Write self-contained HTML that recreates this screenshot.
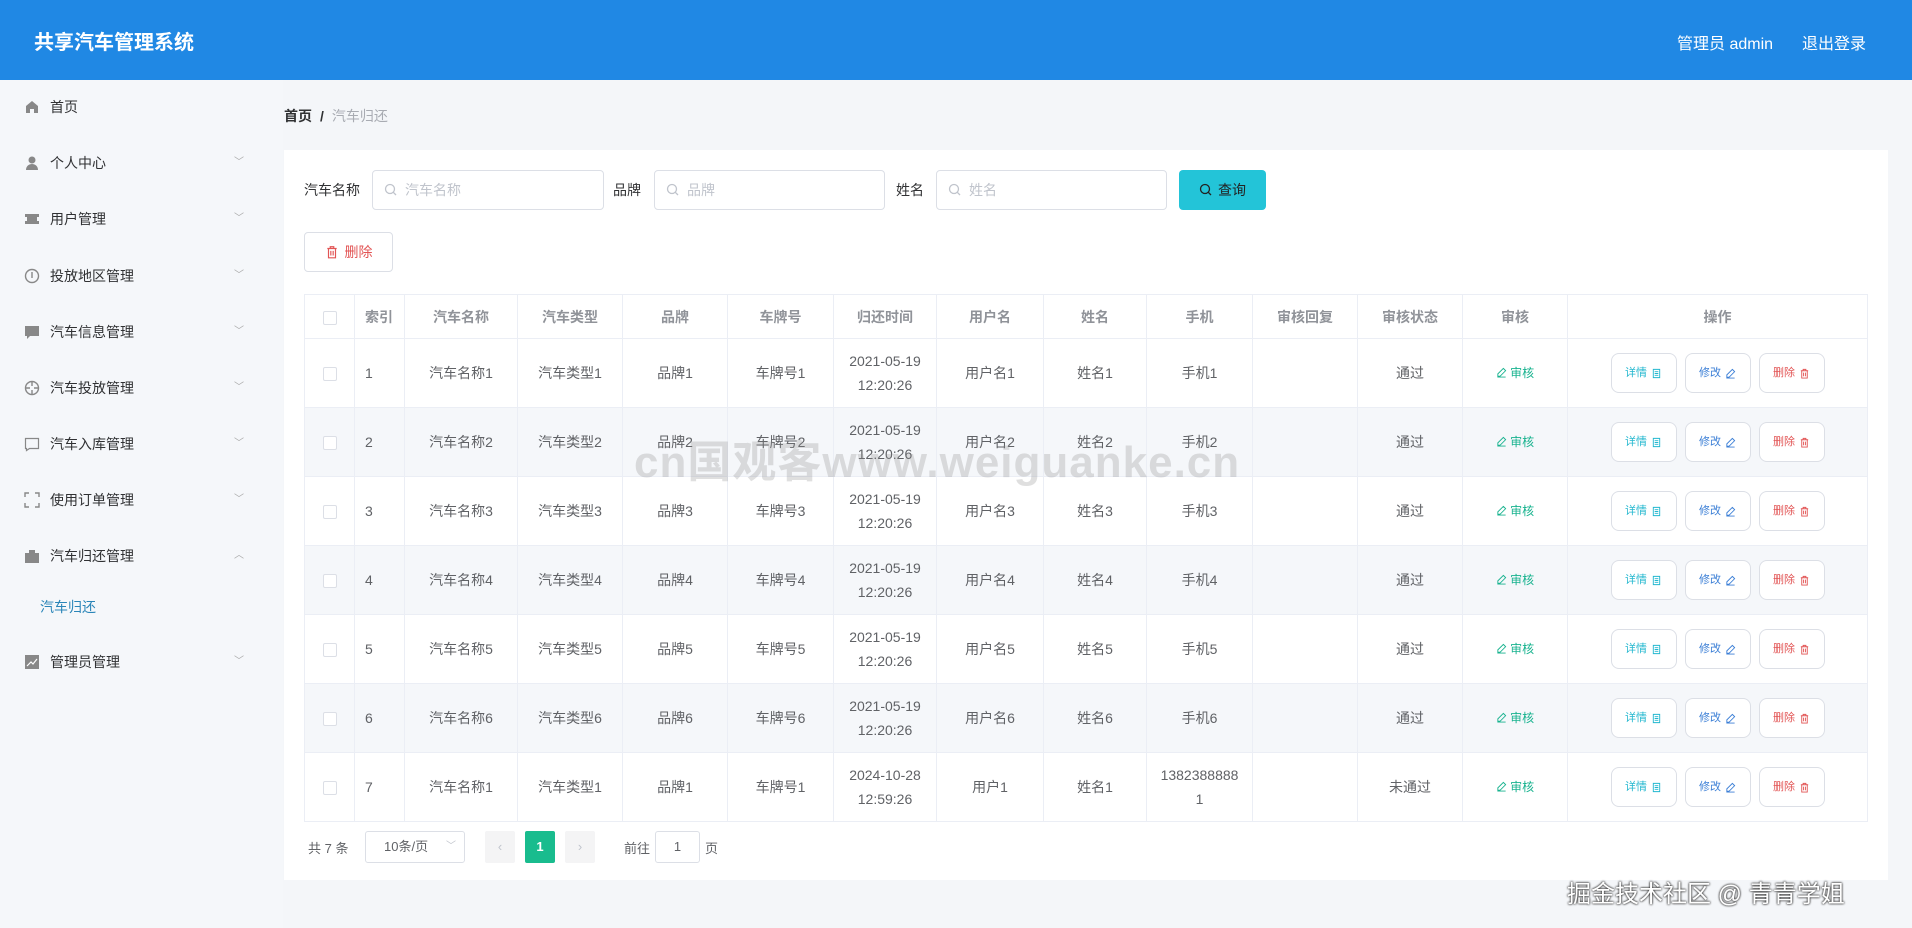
<!DOCTYPE html>
<html><head><meta charset="utf-8"><style>
*{box-sizing:border-box;margin:0;padding:0}
body{width:1912px;height:928px;overflow:hidden;background:#f4f6f9;font-family:"Liberation Sans","Noto Sans CJK SC",sans-serif;color:#606266;position:relative;font-size:14px}
.hd{position:absolute;left:0;top:0;width:1912px;height:80px;background:#2088e4;color:#fff}
.hd .t{position:absolute;left:34px;top:26px;font-size:20px;font-weight:bold}
.hd .r{position:absolute;top:30px;font-size:16px}
.side{position:absolute;left:0;top:80px;width:283px;height:848px;background:#f5f7fa}
.mi{position:absolute;left:24px;font-size:14px;color:#303133;height:20px;line-height:20px;width:220px}
.mi .ic{display:inline-block;width:16px;height:16px;vertical-align:-3px;margin-right:10px}
.mi .ch{position:absolute;right:0;top:0;color:#aaa;font-size:10px}
.card{position:absolute;left:284px;top:150px;width:1604px;height:730px;background:#fff}
.lbl{position:absolute;top:180px;font-size:14px;color:#303133}
.inp{position:absolute;top:170px;height:40px;border:1px solid #dcdfe6;border-radius:4px;color:#c0c4cc;font-size:14px;line-height:38px;padding-left:32px}
.inp svg{position:absolute;left:11px;top:12px}
table{position:absolute;left:304px;top:294px;border-collapse:collapse;table-layout:fixed;width:1563px}
td,th{border:1px solid #ebeef5;text-align:center;font-size:14px;vertical-align:middle}
th{height:44px;color:#909399;font-weight:bold;font-size:14px}
td{height:69px;color:#606266;line-height:24px}
tr.s td{background:#f5f7fa}
.cb{display:inline-block;width:14px;height:14px;border:1px solid #dcdfe6;border-radius:2px;background:#fff;vertical-align:middle}
.ob{display:inline-flex;align-items:center;justify-content:center;gap:4px;width:66px;height:40px;border:1px solid #dcdfe6;border-radius:8px;font-size:11px;margin:0 4px;background:#fff;vertical-align:middle}
.pg{position:absolute;font-size:13px;color:#606266}
</style></head><body>
<svg width="0" height="0" style="position:absolute"><defs>
<symbol id="tr" viewBox="0 0 12 12"><path d="M2 3h8M4.5 3V1.5h3V3M3 3v8h6V3M5 5v4M7 5v4" fill="none" stroke="currentColor" stroke-width="1"/></symbol>
<symbol id="ed" viewBox="0 0 12 12"><path d="M8 1.5l2.5 2.5L4.5 10H2V7.5zM1.5 11h9" fill="none" stroke="currentColor" stroke-width="1"/></symbol>
<symbol id="dc" viewBox="0 0 12 12"><path d="M2.5 1.5h7v9h-7zM4 4h4M4 6h4M4 8h4" fill="none" stroke="currentColor" stroke-width="1"/></symbol>
<symbol id="sr" viewBox="0 0 14 14"><circle cx="6" cy="6" r="4.5" fill="none" stroke="currentColor" stroke-width="1.3"/><path d="M9.3 9.3L12 12" stroke="currentColor" stroke-width="1.3"/></symbol>
</defs></svg>
<div class="hd"><div class="t">共享汽车管理系统</div><div class="r" style="left:1677px">管理员 admin</div><div class="r" style="left:1802px">退出登录</div></div>
<div class="side">
<div class="mi" style="top:17px"><svg class="ic" viewBox="0 0 16 16"><path d="M8 2L2 7v7h4v-4h4v4h4V7z" fill="#888"/></svg>首页</div>
<div class="mi" style="top:73px"><svg class="ic" viewBox="0 0 16 16"><circle cx="8" cy="5" r="3.5" fill="#888"/><path d="M2 15c0-4 3-6 6-6s6 2 6 6z" fill="#888"/></svg>个人中心<span class="ch">﹀</span></div>
<div class="mi" style="top:129px"><svg class="ic" viewBox="0 0 16 16"><path d="M1 3h14v3h-2v4h2v3H1v-3h2V6H1z" fill="#888"/></svg>用户管理<span class="ch">﹀</span></div>
<div class="mi" style="top:186px"><svg class="ic" viewBox="0 0 16 16"><circle cx="8" cy="8" r="6.5" fill="none" stroke="#888" stroke-width="1.4"/><path d="M8 4v6" stroke="#888" stroke-width="1.4"/></svg>投放地区管理<span class="ch">﹀</span></div>
<div class="mi" style="top:242px"><svg class="ic" viewBox="0 0 16 16"><path d="M1 2h14v10H6l-3 3v-3H1z" fill="#888"/></svg>汽车信息管理<span class="ch">﹀</span></div>
<div class="mi" style="top:298px"><svg class="ic" viewBox="0 0 16 16"><circle cx="8" cy="8" r="6.5" fill="none" stroke="#888" stroke-width="1.4"/><path d="M8 1v5M8 10v5M1 8h5M10 8h5" stroke="#888" stroke-width="1.4"/></svg>汽车投放管理<span class="ch">﹀</span></div>
<div class="mi" style="top:354px"><svg class="ic" viewBox="0 0 16 16"><path d="M1.5 2.5h13v10h-9l-3 2v-2h-1z" fill="none" stroke="#888" stroke-width="1.2"/></svg>汽车入库管理<span class="ch">﹀</span></div>
<div class="mi" style="top:410px"><svg class="ic" viewBox="0 0 16 16"><path d="M1 5V1h4M11 1h4v4M15 11v4h-4M5 15H1v-4" fill="none" stroke="#888" stroke-width="1.4"/></svg>使用订单管理<span class="ch">﹀</span></div>
<div class="mi" style="top:466px"><svg class="ic" viewBox="0 0 16 16"><path d="M5 2h6v3H5zM1 5h14v10H1z" fill="#888"/></svg>汽车归还管理<span class="ch">︿</span></div>
<div class="mi" style="top:517px;left:40px;color:#2a85b8">汽车归还</div>
<div class="mi" style="top:572px"><svg class="ic" viewBox="0 0 16 16"><rect x="1" y="1" width="14" height="14" fill="#888"/><path d="M3 12l4-4 2 2 4-5" stroke="#fff" stroke-width="1.2" fill="none"/></svg>管理员管理<span class="ch">﹀</span></div>
</div>
<div style="position:absolute;left:284px;top:106px;font-size:14px"><b style="color:#303133">首页</b><b style="color:#303133;margin:0 8px">/</b><span style="color:#a8abb2">汽车归还</span></div>
<div class="card"></div>
<div class="lbl" style="left:304px">汽车名称</div><div class="inp" style="left:372px;width:232px"><svg width="14" height="14" style="color:#c0c4cc"><use href="#sr"/></svg>汽车名称</div>
<div class="lbl" style="left:613px">品牌</div><div class="inp" style="left:654px;width:231px"><svg width="14" height="14" style="color:#c0c4cc"><use href="#sr"/></svg>品牌</div>
<div class="lbl" style="left:896px">姓名</div><div class="inp" style="left:936px;width:231px"><svg width="14" height="14" style="color:#c0c4cc"><use href="#sr"/></svg>姓名</div>
<div style="position:absolute;left:1179px;top:170px;width:87px;height:40px;background:#23c4d8;border-radius:4px;color:#222;font-size:14px;display:flex;align-items:center;justify-content:center;gap:5px"><svg width="14" height="14" style="color:#222"><use href="#sr"/></svg>查询</div>
<div style="position:absolute;left:304px;top:232px;width:89px;height:40px;border:1px solid #dcdfe6;border-radius:4px;color:#e25454;font-size:14px;display:flex;align-items:center;justify-content:center;gap:6px"><svg width="14" height="14" style="color:#e25454"><use href="#tr"/></svg>删除</div>
<table>
<colgroup><col width="50"><col width="50"><col width="113"><col width="105"><col width="105"><col width="106"><col width="103"><col width="107"><col width="103"><col width="106"><col width="105"><col width="105"><col width="105"><col width="300"></colgroup>
<tr><th><span class="cb"></span></th><th style="text-align:left;padding-left:10px">索引</th><th>汽车名称</th><th>汽车类型</th><th>品牌</th><th>车牌号</th><th>归还时间</th><th>用户名</th><th>姓名</th><th>手机</th><th>审核回复</th><th>审核状态</th><th>审核</th><th>操作</th></tr>
<tr><td><span class="cb"></span></td><td style="text-align:left;padding-left:10px">1</td><td>汽车名称1</td><td>汽车类型1</td><td>品牌1</td><td>车牌号1</td><td>2021-05-19<br>12:20:26</td><td>用户名1</td><td>姓名1</td><td>手机1</td><td></td><td>通过</td><td style="color:#19b38f;font-size:12px"><svg width="11" height="11" style="color:#19b38f;vertical-align:-1px"><use href="#ed"/></svg> 审核</td><td><span class="ob" style="color:#22b7cf">详情<svg width="11" height="11"><use href="#dc"/></svg></span><span class="ob" style="color:#3c7fd6">修改<svg width="11" height="11"><use href="#ed"/></svg></span><span class="ob" style="color:#e25454">删除<svg width="11" height="11"><use href="#tr"/></svg></span></td></tr>
<tr class="s"><td><span class="cb"></span></td><td style="text-align:left;padding-left:10px">2</td><td>汽车名称2</td><td>汽车类型2</td><td>品牌2</td><td>车牌号2</td><td>2021-05-19<br>12:20:26</td><td>用户名2</td><td>姓名2</td><td>手机2</td><td></td><td>通过</td><td style="color:#19b38f;font-size:12px"><svg width="11" height="11" style="color:#19b38f;vertical-align:-1px"><use href="#ed"/></svg> 审核</td><td><span class="ob" style="color:#22b7cf">详情<svg width="11" height="11"><use href="#dc"/></svg></span><span class="ob" style="color:#3c7fd6">修改<svg width="11" height="11"><use href="#ed"/></svg></span><span class="ob" style="color:#e25454">删除<svg width="11" height="11"><use href="#tr"/></svg></span></td></tr>
<tr><td><span class="cb"></span></td><td style="text-align:left;padding-left:10px">3</td><td>汽车名称3</td><td>汽车类型3</td><td>品牌3</td><td>车牌号3</td><td>2021-05-19<br>12:20:26</td><td>用户名3</td><td>姓名3</td><td>手机3</td><td></td><td>通过</td><td style="color:#19b38f;font-size:12px"><svg width="11" height="11" style="color:#19b38f;vertical-align:-1px"><use href="#ed"/></svg> 审核</td><td><span class="ob" style="color:#22b7cf">详情<svg width="11" height="11"><use href="#dc"/></svg></span><span class="ob" style="color:#3c7fd6">修改<svg width="11" height="11"><use href="#ed"/></svg></span><span class="ob" style="color:#e25454">删除<svg width="11" height="11"><use href="#tr"/></svg></span></td></tr>
<tr class="s"><td><span class="cb"></span></td><td style="text-align:left;padding-left:10px">4</td><td>汽车名称4</td><td>汽车类型4</td><td>品牌4</td><td>车牌号4</td><td>2021-05-19<br>12:20:26</td><td>用户名4</td><td>姓名4</td><td>手机4</td><td></td><td>通过</td><td style="color:#19b38f;font-size:12px"><svg width="11" height="11" style="color:#19b38f;vertical-align:-1px"><use href="#ed"/></svg> 审核</td><td><span class="ob" style="color:#22b7cf">详情<svg width="11" height="11"><use href="#dc"/></svg></span><span class="ob" style="color:#3c7fd6">修改<svg width="11" height="11"><use href="#ed"/></svg></span><span class="ob" style="color:#e25454">删除<svg width="11" height="11"><use href="#tr"/></svg></span></td></tr>
<tr><td><span class="cb"></span></td><td style="text-align:left;padding-left:10px">5</td><td>汽车名称5</td><td>汽车类型5</td><td>品牌5</td><td>车牌号5</td><td>2021-05-19<br>12:20:26</td><td>用户名5</td><td>姓名5</td><td>手机5</td><td></td><td>通过</td><td style="color:#19b38f;font-size:12px"><svg width="11" height="11" style="color:#19b38f;vertical-align:-1px"><use href="#ed"/></svg> 审核</td><td><span class="ob" style="color:#22b7cf">详情<svg width="11" height="11"><use href="#dc"/></svg></span><span class="ob" style="color:#3c7fd6">修改<svg width="11" height="11"><use href="#ed"/></svg></span><span class="ob" style="color:#e25454">删除<svg width="11" height="11"><use href="#tr"/></svg></span></td></tr>
<tr class="s"><td><span class="cb"></span></td><td style="text-align:left;padding-left:10px">6</td><td>汽车名称6</td><td>汽车类型6</td><td>品牌6</td><td>车牌号6</td><td>2021-05-19<br>12:20:26</td><td>用户名6</td><td>姓名6</td><td>手机6</td><td></td><td>通过</td><td style="color:#19b38f;font-size:12px"><svg width="11" height="11" style="color:#19b38f;vertical-align:-1px"><use href="#ed"/></svg> 审核</td><td><span class="ob" style="color:#22b7cf">详情<svg width="11" height="11"><use href="#dc"/></svg></span><span class="ob" style="color:#3c7fd6">修改<svg width="11" height="11"><use href="#ed"/></svg></span><span class="ob" style="color:#e25454">删除<svg width="11" height="11"><use href="#tr"/></svg></span></td></tr>
<tr><td><span class="cb"></span></td><td style="text-align:left;padding-left:10px">7</td><td>汽车名称1</td><td>汽车类型1</td><td>品牌1</td><td>车牌号1</td><td>2024-10-28<br>12:59:26</td><td>用户1</td><td>姓名1</td><td>1382388888<br>1</td><td></td><td>未通过</td><td style="color:#19b38f;font-size:12px"><svg width="11" height="11" style="color:#19b38f;vertical-align:-1px"><use href="#ed"/></svg> 审核</td><td><span class="ob" style="color:#22b7cf">详情<svg width="11" height="11"><use href="#dc"/></svg></span><span class="ob" style="color:#3c7fd6">修改<svg width="11" height="11"><use href="#ed"/></svg></span><span class="ob" style="color:#e25454">删除<svg width="11" height="11"><use href="#tr"/></svg></span></td></tr>
</table>
<div class="pg" style="left:308px;top:838px">共 7 条</div>
<div class="pg" style="left:365px;top:831px;width:100px;height:32px;border:1px solid #dcdfe6;border-radius:3px;line-height:30px;padding-left:18px">10条/页<span style="position:absolute;right:8px;color:#c0c4cc;font-size:10px">﹀</span></div>
<div class="pg" style="left:485px;top:831px;width:30px;height:32px;background:#f4f4f5;border-radius:2px;text-align:center;line-height:32px;color:#c0c4cc">‹</div>
<div class="pg" style="left:525px;top:831px;width:30px;height:32px;background:#19bc8e;border-radius:2px;text-align:center;line-height:32px;color:#fff;font-weight:bold">1</div>
<div class="pg" style="left:565px;top:831px;width:30px;height:32px;background:#f4f4f5;border-radius:2px;text-align:center;line-height:32px;color:#c0c4cc">›</div>
<div class="pg" style="left:624px;top:838px">前往</div>
<div class="pg" style="left:655px;top:831px;width:45px;height:32px;border:1px solid #dcdfe6;border-radius:3px;text-align:center;line-height:30px">1</div>
<div class="pg" style="left:705px;top:838px">页</div>
<div style="position:absolute;left:634px;top:426px;font-size:44px;font-weight:bold;color:rgba(140,140,140,0.28);letter-spacing:1px">cn国观客www.weiguanke.cn</div>
<div style="position:absolute;left:1567px;top:874px;font-size:24px;color:#fff;text-shadow:0 0 2px #333,0 0 2px #333">掘金技术社区 @ 青青学姐</div>
</body></html>
